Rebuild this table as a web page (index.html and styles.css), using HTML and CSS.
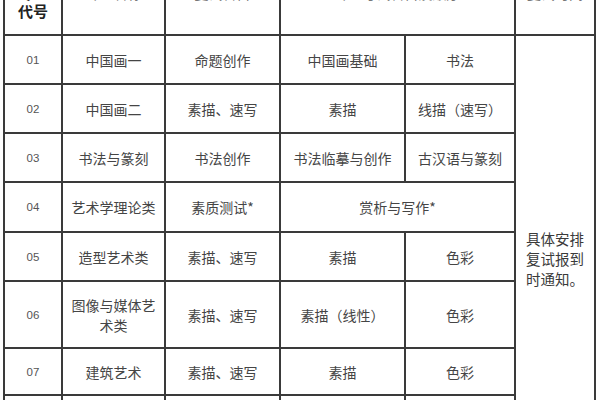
FILE: index.html
```html
<!DOCTYPE html>
<html lang="zh-CN">
<head>
<meta charset="utf-8">
<title>复试科目</title>
<link rel="stylesheet" href="styles.css">
</head>
<body>
<div class="sheet">
  <table class="grid">
    <colgroup>
      <col class="c1"><col class="c2"><col class="c3"><col class="c4"><col class="c5"><col class="c6">
    </colgroup>
    <tr class="head">
      <th class="code-h">专业<br>代号</th>
      <th class="title-h">专业名称</th>
      <th class="title-h">复试科目</th>
      <th class="title-h" colspan="2">专业考试科目及顺序</th>
      <th class="title-h">复试时间</th>
    </tr>
    <tr class="row">
      <td class="code">01</td><td>中国画一</td><td>命题创作</td><td>中国画基础</td><td>书法</td>
      <td class="note" rowspan="9">具体安排复试报到时通知。</td>
    </tr>
    <tr class="row">
      <td class="code">02</td><td>中国画二</td><td>素描、速写</td><td>素描</td><td>线描（速写）</td>
    </tr>
    <tr class="row">
      <td class="code">03</td><td>书法与篆刻</td><td>书法创作</td><td>书法临摹与创作</td><td>古汉语与篆刻</td>
    </tr>
    <tr class="row r4">
      <td class="code">04</td><td>艺术学理论类</td><td>素质测试*</td><td colspan="2">赏析与写作*</td>
    </tr>
    <tr class="row">
      <td class="code">05</td><td>造型艺术类</td><td>素描、速写</td><td>素描</td><td>色彩</td>
    </tr>
    <tr class="row tall">
      <td class="code">06</td><td class="wrap">图像与媒体艺术类</td><td>素描、速写</td><td>素描（线性）</td><td>色彩</td>
    </tr>
    <tr class="row r7">
      <td class="code">07</td><td>建筑艺术</td><td>素描、速写</td><td>素描</td><td>色彩</td>
    </tr>
    <tr class="row r8">
      <td class="code">08</td><td>设计类</td><td>素描、速写</td><td>素描</td><td>色彩</td>
    </tr>
    <tr class="row r8">
      <td class="code">09</td><td>工艺美术</td><td>素描、速写</td><td>素描</td><td>色彩</td>
    </tr>
  </table>
</div>
</body>
</html>
```

FILE: styles.css
```css
html, body {
  margin: 0;
  padding: 0;
  background: #ffffff;
}

.sheet {
  width: 600px;
  height: 400px;
  overflow: hidden;
  padding-left: 3px;
  box-sizing: border-box;
}

.grid {
  margin-top: -33px;
  width: 591px;
  table-layout: fixed;
  border-collapse: collapse;
  font-family: "Noto Sans CJK SC", "Noto Sans", sans-serif;
  font-size: 14px;
  color: #454545;
}

.c1 { width: 58px; }
.c2 { width: 103px; }
.c3 { width: 115px; }
.c4 { width: 125px; }
.c5 { width: 110px; }
.c6 { width: 80px; }

.grid th,
.grid td {
  border: 2px solid #3a3a3a;
  text-align: center;
  vertical-align: middle;
  padding: 0 6px;
  line-height: 20px;
  font-weight: normal;
}

.head { height: 67px; }
.head .title-h {
  color: #777;
  padding-bottom: 18px;
}
.head .code-h {
  font-weight: bold;
  font-size: 15px;
  color: #222;
  line-height: 18px;
}

.row { height: 49px; }
.r4 { height: 50px; }
.tall { height: 67px; }
.r7 { height: 47px; }
.r8 { height: 44px; }

.code {
  font-family: "Liberation Sans", "Noto Sans", sans-serif;
  font-size: 11.5px;
  color: #555;
}

.wrap { word-break: break-all; }

.note {
  text-align: left;
  padding: 0 8px 0 10px;
  font-size: 14.5px;
  line-height: 18px;
  color: #3a3a3a;
}
```
